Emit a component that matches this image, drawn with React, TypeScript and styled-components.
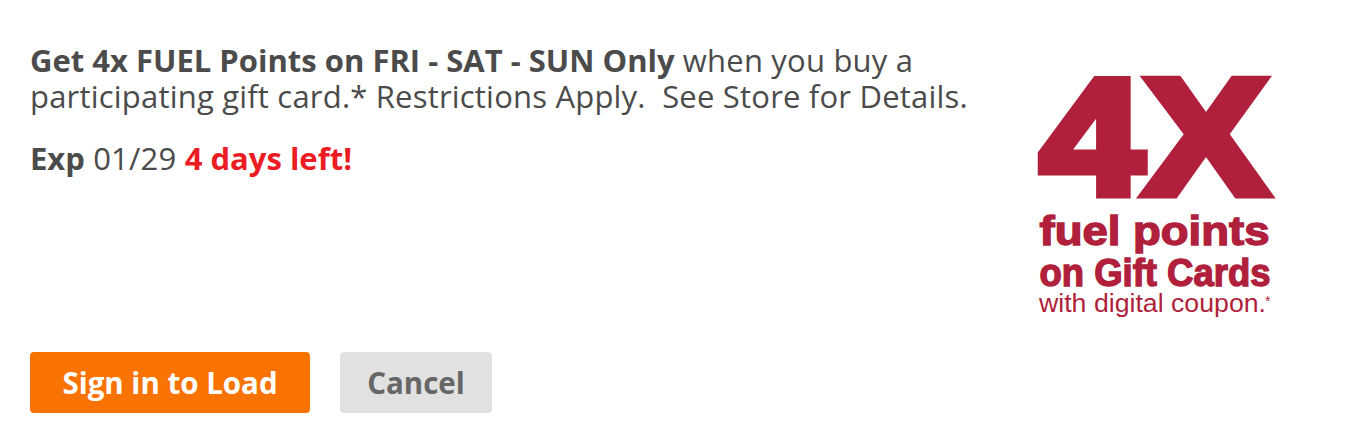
import React from "react";
import styled, { createGlobalStyle } from "styled-components";

const Global = createGlobalStyle`
  html, body { margin: 0; padding: 0; background: #ffffff; }
  body { font-family: "Open Sans", sans-serif; }
`;

const Page = styled.div`
  display: flex;
  width: 1356px;
  height: 434px;
  box-sizing: border-box;
`;

const Details = styled.div`
  flex: 1;
  display: flex;
  flex-direction: column;
  justify-content: space-between;
  padding: 42px 0 21px 30px;
`;

const Copy = styled.div`
  max-width: 965px;
  color: #4b4b4b;
  font-family: "Open Sans", sans-serif;
  font-size: 31px;
  letter-spacing: 0.2px;
  line-height: 36px;
`;

const Para = styled.p<{ $gap?: number }>`
  margin: 0 0 ${(p) => p.$gap ?? 0}px 0;
  white-space: pre-wrap;
`;

const Strong = styled.b`
  font-weight: 700;
  letter-spacing: 0;
`;

const Warn = styled.span`
  color: #ec1c24;
  font-weight: 700;
  letter-spacing: 0;
`;

const Actions = styled.div`
  display: flex;
  gap: 30px;
`;

const Button = styled.button<{ $primary?: boolean }>`
  height: 61px;
  width: ${(p) => (p.$primary ? 280 : 152)}px;
  padding: 0;
  border: none;
  border-radius: 4px;
  font-family: "Open Sans", sans-serif;
  font-weight: 700;
  font-size: 29.5px;
  cursor: pointer;
  background: ${(p) => (p.$primary ? "#f97303" : "#e1e1e1")};
  color: ${(p) => (p.$primary ? "#ffffff" : "#666666")};
`;

const Logo = styled.svg`
  flex: none;
  margin: 60px 76px 0 0;
  width: 250px;
  height: 270px;
  font-family: "Liberation Sans", Arial, sans-serif;
  fill: #b01f3c;
  stroke: #b01f3c;
  stroke-linejoin: miter;
`;

export default function App() {
  return (
    <>
      <Global />
      <Page>
        <Details>
          <Copy>
            <Para $gap={26}>
              <Strong>Get 4x FUEL Points on FRI - SAT - SUN Only</Strong> when you buy a
              participating gift card.* Restrictions Apply.{"\u00a0\u00a0"}See Store for Details.
            </Para>
            <Para>
              <Strong>Exp</Strong> 01/29 <Warn>4 days left!</Warn>
            </Para>
          </Copy>
          <Actions>
            <Button $primary>Sign in to Load</Button>
            <Button>Cancel</Button>
          </Actions>
        </Details>
        <Logo viewBox="0 0 250 270">
          <text x="10" y="133.5" fontSize="165" fontWeight="700" strokeWidth="9" textLength="228" lengthAdjust="spacingAndGlyphs">4X</text>
          <text x="9.5" y="185" fontSize="40" fontWeight="700" strokeWidth="1.4" textLength="230" lengthAdjust="spacingAndGlyphs">fuel points</text>
          <text x="9.5" y="226" fontSize="38" fontWeight="700" strokeWidth="1.4" textLength="231" lengthAdjust="spacingAndGlyphs">on Gift Cards</text>
          <text x="9" y="252" fontSize="26" strokeWidth="0" textLength="227" lengthAdjust="spacingAndGlyphs">with digital coupon.</text>
          <text x="235" y="246" fontSize="14" strokeWidth="0">*</text>
        </Logo>
      </Page>
    </>
  );
}
